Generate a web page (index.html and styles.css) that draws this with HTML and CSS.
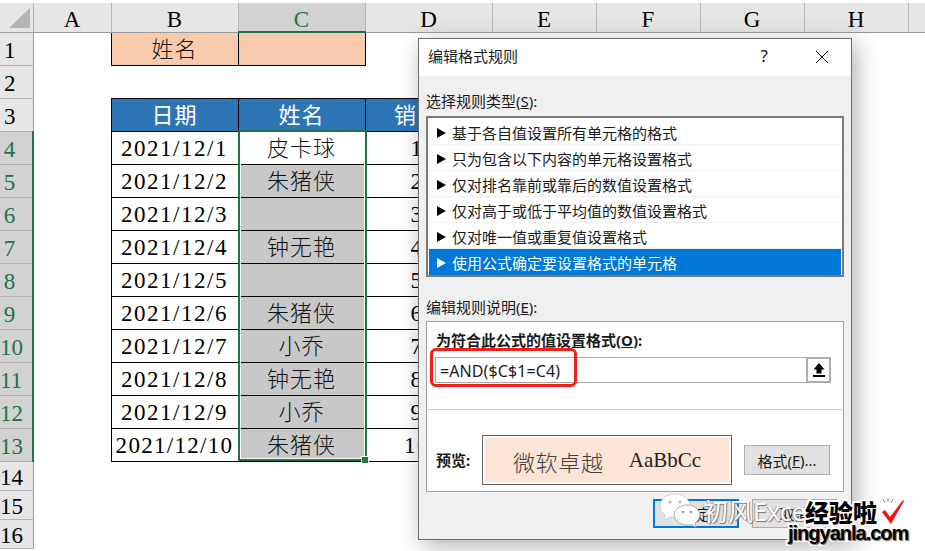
FILE: index.html
```html
<!DOCTYPE html>
<html lang="zh-CN">
<head>
    <meta charset="UTF-8">
    <meta name="viewport" content="width=device-width, initial-scale=1.0">
    <title>编辑格式规则</title>
    <link rel="stylesheet" href="styles.css">
</head>
<body>
    <div class="sheet">
        <table class="grid">
            <colgroup>
                <col class="col-head"><col class="col-a"><col class="col-wide"><col class="col-wide"><col class="col-wide">
                <col class="col-std"><col class="col-std"><col class="col-std"><col class="col-std"><col class="col-rest">
            </colgroup>
            <thead>
                <tr>
                    <th class="corner"><span class="corner-mark"></span></th>
                    <th>A</th><th>B</th><th class="active-col">C</th><th>D</th><th>E</th><th>F</th><th>G</th><th>H</th><th></th>
                </tr>
            </thead>
            <tbody>
                <tr><th class="row-num">1</th><td></td><td class="cell peach cn">姓名</td><td class="cell peach"></td><td colspan="6"></td></tr>
                <tr><th class="row-num">2</th><td colspan="9"></td></tr>
                <tr><th class="row-num">3</th><td></td><td class="cell blue cn">日期</td><td class="cell blue cn">姓名</td><td class="cell blue cn">销售额</td><td colspan="5"></td></tr>
                <tr><th class="row-num active-row">4</th><td></td><td class="cell">2021/12/1</td><td class="cell cn">皮卡球</td><td class="cell num">100</td><td colspan="5"></td></tr>
                <tr><th class="row-num active-row">5</th><td></td><td class="cell">2021/12/2</td><td class="cell grey cn">朱猪侠</td><td class="cell num">200</td><td colspan="5"></td></tr>
                <tr><th class="row-num active-row">6</th><td></td><td class="cell">2021/12/3</td><td class="cell grey cn"></td><td class="cell num">300</td><td colspan="5"></td></tr>
                <tr><th class="row-num active-row">7</th><td></td><td class="cell">2021/12/4</td><td class="cell grey cn">钟无艳</td><td class="cell num">400</td><td colspan="5"></td></tr>
                <tr><th class="row-num active-row">8</th><td></td><td class="cell">2021/12/5</td><td class="cell grey cn"></td><td class="cell num">500</td><td colspan="5"></td></tr>
                <tr><th class="row-num active-row">9</th><td></td><td class="cell">2021/12/6</td><td class="cell grey cn">朱猪侠</td><td class="cell num">600</td><td colspan="5"></td></tr>
                <tr><th class="row-num active-row">10</th><td></td><td class="cell">2021/12/7</td><td class="cell grey cn">小乔</td><td class="cell num">700</td><td colspan="5"></td></tr>
                <tr><th class="row-num active-row">11</th><td></td><td class="cell">2021/12/8</td><td class="cell grey cn">钟无艳</td><td class="cell num">800</td><td colspan="5"></td></tr>
                <tr><th class="row-num active-row">12</th><td></td><td class="cell">2021/12/9</td><td class="cell grey cn">小乔</td><td class="cell num">900</td><td colspan="5"></td></tr>
                <tr><th class="row-num active-row">13</th><td></td><td class="cell tight">2021/12/10</td><td class="cell grey cn">朱猪侠</td><td class="cell num">1000</td><td colspan="5"></td></tr>
                <tr class="short"><th class="row-num">14</th><td colspan="9"></td></tr>
                <tr class="short"><th class="row-num">15</th><td colspan="9"></td></tr>
                <tr class="short"><th class="row-num">16</th><td colspan="9"></td></tr>
            </tbody>
        </table>
        <div class="selection"><span class="fill-handle"></span></div>
    </div>

    <div class="dialog">
        <div class="title-bar">
            <span class="title">编辑格式规则</span>
            <span class="help">?</span>
            <svg class="close" width="14" height="14" viewBox="0 0 14 14"><path d="M1 1L13 13M13 1L1 13" stroke="#111" stroke-width="1" fill="none"/></svg>
        </div>
        <div class="body">
            <div class="label">选择规则类型(<u>S</u>):</div>
            <ul class="rule-list">
                <li>基于各自值设置所有单元格的格式</li>
                <li>只为包含以下内容的单元格设置格式</li>
                <li>仅对排名靠前或靠后的数值设置格式</li>
                <li>仅对高于或低于平均值的数值设置格式</li>
                <li>仅对唯一值或重复值设置格式</li>
                <li class="selected">使用公式确定要设置格式的单元格</li>
            </ul>
            <div class="label desc-label">编辑规则说明(<u>E</u>):</div>
            <div class="desc">
                <div class="bold-label">为符合此公式的值设置格式(<u>O</u>):</div>
                <div class="formula-row">
                    <div class="formula">=AND($C$1=C4)</div>
                    <div class="ref-btn">
                        <svg width="14" height="16" viewBox="0 0 14 16"><path d="M7 1L12.5 7.5H9.5V11.5H4.5V7.5H1.5Z" fill="#000"/><rect x="1" y="13" width="12" height="2" fill="#000"/></svg>
                    </div>
                    <div class="red-box"></div>
                </div>
                <div class="divider"></div>
                <div class="preview-row">
                    <span class="bold-label">预览:</span>
                    <div class="preview"><div class="preview-fill"><span class="cn-sample">微软卓越</span><span class="latin-sample">AaBbCc</span></div></div>
                    <div class="btn format-btn">格式(<u>F</u>)...</div>
                </div>
            </div>
            <div class="actions">
                <div class="btn ok-btn">确定</div>
                <div class="btn cancel-btn">取消</div>
            </div>
        </div>
    </div>

    <div class="watermark">
        <svg class="wechat" width="44" height="40" viewBox="0 0 44 40">
            <path d="M16 1C8 1 1 6 1 13c0 4 2 7 5 9l-1 5 6-3c2 .5 3 .5 5 .5 8 0 15-5 15-11.500S24 1 16 1Z" fill="#fff" stroke="#ccc" stroke-width=".8"/>
            <circle cx="11" cy="9" r="1.600" fill="#bbb"/><circle cx="21" cy="9" r="1.600" fill="#bbb"/>
            <path d="M28 12c-7 0-13 4.500-13 10s6 10 13 10c1.500 0 2.500 0 4-.5l5 3-1-4.500c3-2 5-4.500 5-8 0-5.500-6-10-13-10Z" fill="#fff" stroke="#999" stroke-width=".8"/>
            <circle cx="24" cy="19" r="1.300" fill="#999"/><circle cx="32" cy="19" r="1.300" fill="#999"/>
        </svg>
        <span class="wm-name">初风Excel</span>
        <span class="wm-site">经验啦</span>
        <svg class="wm-check" width="26" height="28" viewBox="0 0 26 28">
            <path d="M3 1L5 5M8 0V4M13 1L11 5" stroke="#888" stroke-width="1" fill="none"/>
            <path d="M2 14L5 12L10 19L23 2L24 3L11 26Z" fill="#f01414"/>
        </svg>
        <span class="wm-url">jingyanla.com</span>
    </div>
</body>
</html>
```

FILE: styles.css
```css
* {
    box-sizing: border-box;
}
body {
    margin: 0;
    width: 925px;
    height: 551px;
    overflow: hidden;
    background-color: #fff;
    color: #000;
    position: relative;
    font-family: "Noto Sans", "Noto Sans CJK SC", sans-serif;
}

/* spreadsheet */
.sheet {
    position: relative;
    padding-top: 3px;
}
.grid {
    border-collapse: collapse;
    table-layout: fixed;
    width: 925px;
    font-family: "Liberation Serif", "Noto Sans CJK SC", serif;
    font-size: 23px;
}
.col-head { width: 33px; }
.col-a { width: 78px; }
.col-wide { width: 127px; }
.col-std { width: 104px; }
.col-rest { width: 17px; }
thead th {
    height: 28px;
    padding: 5px 0 0;
    font-weight: normal;
    background-color: #e6e6e6;
    border-right: 1px solid #b4b4b4;
    border-bottom: 1px solid #9c9c9c;
    line-height: 23px;
}
thead th:last-child {
    border-right: none;
}
.corner {
    position: relative;
}
.corner-mark {
    position: absolute;
    left: 9px;
    top: 5px;
    width: 0;
    height: 0;
    border-left: 21px solid transparent;
    border-bottom: 20px solid #b4b4b4;
}
thead .active-col {
    background-color: #d2d2d2;
    color: #217346;
    border-bottom: 2px solid #217346;
}
tbody tr {
    height: 33px;
}
tbody tr.short {
    height: 29px;
}
.row-num {
    padding: 4px 13px 0 0;
    font-weight: normal;
    font-size: 23px;
    background-color: #e6e6e6;
    border-right: 1px solid #9c9c9c;
    border-bottom: 1px solid #b4b4b4;
    text-align: center;
    white-space: nowrap;
    line-height: 1;
    overflow: visible;
}
.row-num.active-row {
    background-color: #d2d2d2;
    color: #217346;
    border-right: 2px solid #217346;
}
td {
    padding: 0;
}
.cell {
    border: 1px solid #000;
    padding-top: 2px;
    text-align: center;
    font-size: 23px;
    letter-spacing: 1.500px;
    white-space: nowrap;
    overflow: hidden;
    line-height: 1;
}
.cell.tight {
    letter-spacing: 1.300px;
}
.cell.num {
    padding-left: 3px;
}
.cell.cn {
    font-size: 22px;
    font-weight: 300;
    letter-spacing: 1px;
    color: #111;
}
.peach {
    background-color: #f8cbad;
}
.cell.blue {
    background-color: #2e75b6;
    color: #fff;
    font-weight: normal;
}
.grey {
    background-color: #c8c8c8;
}
.selection {
    position: absolute;
    left: 238px;
    top: 130px;
    width: 129px;
    height: 331px;
    border: 2px solid #217346;
    outline: 1px solid #fff;
    outline-offset: -3px;
}
.fill-handle {
    position: absolute;
    right: -3px;
    bottom: -4px;
    width: 6px;
    height: 6px;
    background-color: #217346;
    outline: 1px solid #fff;
}

/* dialog */
.dialog {
    position: absolute;
    left: 418px;
    top: 38px;
    width: 434px;
    height: 502px;
    background-color: #f0f0f0;
    border: 1px solid #6e6e6e;
    box-shadow: 4px 5px 22px rgba(0, 0, 0, 0.32);
    font-size: 15px;
    color: #1a1a1a;
}
.title-bar {
    height: 37px;
    background-color: #fff;
    display: flex;
    align-items: center;
    padding: 0 22px 4px 9px;
}
.title {
    flex: 1;
}
.help {
    margin-right: 47px;
    font-size: 17px;
}
.close {
    margin-top: 3px;
}
.body {
    padding: 0 7px;
}
.label {
    height: 22px;
    line-height: 22px;
    margin-top: 14px;
    white-space: nowrap;
}
.rule-list {
    list-style: none;
    margin: 4px 0 0;
    padding: 1px 1px;
    height: 161px;
    border: 2px solid #7a7a7a;
    background-color: #fff;
}
.rule-list li {
    height: 26px;
    line-height: 28px;
    border-bottom: 1px solid #f0f0f0;
    padding-left: 23px;
    position: relative;
    white-space: nowrap;
}
.rule-list li::before {
    content: "";
    position: absolute;
    left: 8px;
    top: 9px;
    border-left: 9px solid #000;
    border-top: 5px solid transparent;
    border-bottom: 5px solid transparent;
}
.rule-list li.selected {
    background-color: #0078d7;
    color: #fff;
    border-bottom: none;
}
.rule-list li.selected::before {
    border-left-color: #fff;
}
.desc-label {
    margin-top: 19px;
}
.desc {
    margin-top: 3px;
    height: 171px;
    border: 1px solid #a0a0a0;
    background-color: #fff;
    padding: 8px 1px 0;
}
.bold-label {
    font-weight: bold;
    font-size: 15px;
    white-space: nowrap;
    margin-left: 8px;
    line-height: 20px;
}
.formula-row {
    position: relative;
    display: flex;
    height: 26px;
    margin: 7px 11px 0 7px;
}
.formula {
    flex: 1;
    border: 1px solid #a9a9a9;
    border-right: none;
    background-color: #fff;
    padding-left: 4px;
    font-size: 16px;
    letter-spacing: 0.100px;
    line-height: 27px;
}
.ref-btn {
    width: 25px;
    border: 2px solid #adadad;
    background-color: #fff;
    display: flex;
    align-items: center;
    justify-content: center;
}
.red-box {
    position: absolute;
    left: -5px;
    top: -9px;
    width: 147px;
    height: 39px;
    border: 3px solid #f0201c;
    border-radius: 6px;
}
.divider {
    height: 1px;
    background-color: #c8c8c8;
    margin-top: 26px;
}
.preview-row {
    display: flex;
    align-items: center;
    margin-top: 25px;
}
.preview-row .bold-label {
    width: 46px;
}
.preview {
    width: 250px;
    height: 50px;
    border: 1px solid #646464;
    background-color: #fff;
    padding: 2px;
}
.preview-fill {
    height: 100%;
    background-color: #fce4d6;
    display: flex;
    align-items: center;
    justify-content: center;
    gap: 25px;
    padding-top: 1px;
    font-family: "Liberation Serif", "Noto Sans CJK SC", serif;
    font-size: 22px;
    color: #404040;
}
.cn-sample {
    font-weight: 300;
    letter-spacing: 0.700px;
}
.latin-sample {
    font-size: 21px;
    color: #222;
}
.btn {
    height: 30px;
    border: 1px solid #adadad;
    background-color: #e1e1e1;
    display: flex;
    align-items: center;
    justify-content: center;
    white-space: nowrap;
}
.format-btn {
    width: 86px;
    margin-left: 12px;
}
.actions {
    display: flex;
    justify-content: flex-end;
    gap: 13px;
    margin-top: 7px;
    padding-right: 7px;
}
.ok-btn {
    width: 86px;
    height: 29px;
    border: 2px solid #0078d7;
}
.cancel-btn {
    width: 85px;
    height: 29px;
}

/* watermark */
.watermark {
    position: absolute;
    inset: 0;
    pointer-events: none;
}
.wechat {
    position: absolute;
    left: 659px;
    top: 493px;
}
.wm-name {
    position: absolute;
    left: 703px;
    top: 494px;
    font-size: 25px;
    line-height: 34px;
    white-space: nowrap;
    color: #fff;
    text-shadow: 1px 1px 1px #777, -1px 0 0 #999;
}
.wm-site {
    position: absolute;
    left: 805px;
    top: 498px;
    font-size: 24px;
    line-height: 30px;
    font-weight: 900;
    white-space: nowrap;
    color: #000;
    -webkit-text-stroke: 4px #fff;
    paint-order: stroke fill;
}
.wm-check {
    position: absolute;
    left: 880px;
    top: 498px;
}
.wm-url {
    position: absolute;
    left: 788px;
    top: 518px;
    font-family: "Liberation Sans", sans-serif;
    font-size: 20px;
    letter-spacing: -1px;
    line-height: 30px;
    font-weight: bold;
    white-space: nowrap;
    color: #000;
    -webkit-text-stroke: 4px #fff;
    paint-order: stroke fill;
    text-shadow: 1px 1px 1px #666;
}
```
